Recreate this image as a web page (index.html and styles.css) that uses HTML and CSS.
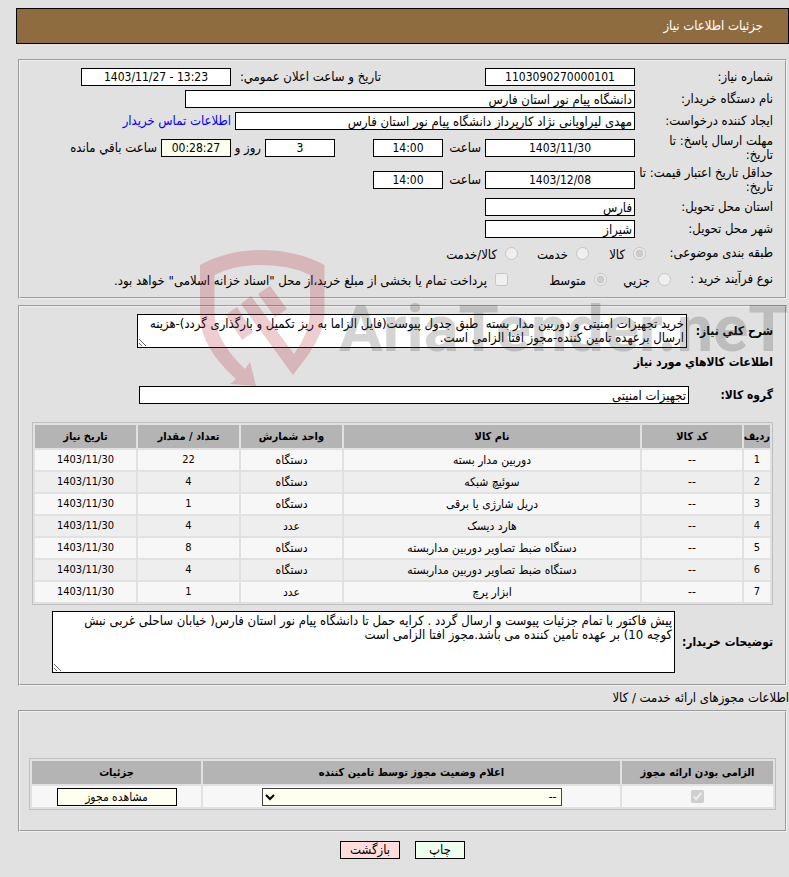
FILE: index.html
```
<!DOCTYPE html>
<html lang="fa" dir="rtl">
<head>
    <meta charset="UTF-8">
    <meta name="viewport" content="width=device-width, initial-scale=1.0">
    <title>جزئیات اطلاعات نیاز</title>
    <link rel="stylesheet" href="styles.css">
</head>
<body>
    <header class="page-title">جزئیات اطلاعات نیاز</header>

    <main>
        <fieldset class="panel panel-summary">
            <div class="row">
                <label class="caption" for="needNo">شماره نیاز:</label>
                <input class="field w-150 num" type="text" id="needNo" value="1103090270000101" readonly>
                <label class="announce" for="announceDate">تاریخ و ساعت اعلان عمومي:</label>
                <input class="field w-150 num" type="text" id="announceDate" value="1403/11/27 - 13:23" dir="ltr" readonly>
            </div>
            <div class="row">
                <label class="caption" for="buyer">نام دستگاه خریدار:</label>
                <input class="field w-450" type="text" id="buyer" value="دانشگاه پیام نور استان فارس" readonly>
            </div>
            <div class="row">
                <label class="caption" for="requester">ایجاد کننده درخواست:</label>
                <input class="field w-400" type="text" id="requester" value="مهدی لیراویانی نژاد کارپرداز دانشگاه پیام نور استان فارس" readonly>
                <a href="#contact" class="contact">اطلاعات تماس خریدار</a>
            </div>
            <div class="row row-tall">
                <label class="caption" for="replyDate">مهلت ارسال پاسخ: تا<br>تاریخ:</label>
                <input class="field w-150 num" type="text" id="replyDate" value="1403/11/30" readonly>
                <label class="hour" for="replyTime">ساعت</label>
                <input class="field w-70 num" type="text" id="replyTime" value="14:00" readonly>
                <input class="field w-70 num days" type="text" id="daysLeft" value="3" readonly>
                <label class="days-unit" for="daysLeft">روز و</label>
                <input class="field w-70 num timer" type="text" id="timeLeft" value="00:28:27" readonly>
                <label for="timeLeft">ساعت باقي مانده</label>
            </div>
            <div class="row row-tall">
                <label class="caption" for="priceDate">حداقل تاریخ اعتبار قیمت: تا<br>تاریخ:</label>
                <input class="field w-150 num" type="text" id="priceDate" value="1403/12/08" readonly>
                <label class="hour" for="priceTime">ساعت</label>
                <input class="field w-70 num" type="text" id="priceTime" value="14:00" readonly>
            </div>
            <div class="row">
                <label class="caption" for="province">استان محل تحویل:</label>
                <input class="field w-150" type="text" id="province" value="فارس" readonly>
            </div>
            <div class="row">
                <label class="caption" for="city">شهر محل تحویل:</label>
                <input class="field w-150" type="text" id="city" value="شیراز" readonly>
            </div>
            <div class="row row-options">
                <span class="caption caption-category">طبقه بندی موضوعی:</span>
                <label class="option opt-goods"><input type="radio" name="category" checked disabled><span>کالا</span></label>
                <label class="option opt-service"><input type="radio" name="category" disabled><span>خدمت</span></label>
                <label class="option"><input type="radio" name="category" disabled><span>کالا/خدمت</span></label>
            </div>
            <div class="row row-options">
                <span class="caption caption-process">نوع فرآیند خرید :</span>
                <label class="option opt-minor"><input type="radio" name="process" disabled><span>جزیي</span></label>
                <label class="option opt-medium"><input type="radio" name="process" checked disabled><span>متوسط</span></label>
                <label class="option"><input type="checkbox" disabled><span>پرداخت تمام یا بخشی از مبلغ خرید،از محل "اسناد خزانه اسلامی" خواهد بود.</span></label>
            </div>
        </fieldset>

        <fieldset class="panel panel-goods">
            <div class="row">
                <label class="strong caption-desc" for="needDesc">شرح کلي نیاز:</label>
                <textarea class="area area-desc" id="needDesc" readonly>خرید تجهیزات امنیتی و دوربین مدار بسته  طبق جدول پیوست(فایل الزاما به ریز تکمیل و بارگذاری گردد)-هزینه ارسال برعهده تامین کننده-مجوز افتا الزامی است.</textarea>
            </div>
            <h2 class="strong heading">اطلاعات کالاهاي مورد نیاز</h2>
            <div class="row">
                <label class="strong caption-group" for="goodsGroup">گروه کالا:</label>
                <input class="field w-550" type="text" id="goodsGroup" value="تجهیزات امنیتی" readonly>
            </div>

            <table class="grid goods">
                <colgroup>
                    <col class="c-index">
                    <col class="c-code">
                    <col>
                    <col class="c-unit">
                    <col class="c-unit">
                    <col class="c-unit">
                </colgroup>
                <thead>
                    <tr><th>ردیف</th><th>کد کالا</th><th>نام کالا</th><th>واحد شمارش</th><th>تعداد / مقدار</th><th>تاریخ نیاز</th></tr>
                </thead>
                <tbody>
                    <tr><td class="n">1</td><td>--</td><td>دوربین مدار بسته</td><td>دستگاه</td><td class="n">22</td><td class="n">1403/11/30</td></tr>
                    <tr><td class="n">2</td><td>--</td><td>سوئیچ شبکه</td><td>دستگاه</td><td class="n">4</td><td class="n">1403/11/30</td></tr>
                    <tr><td class="n">3</td><td>--</td><td>دریل شارژی یا برقی</td><td>دستگاه</td><td class="n">1</td><td class="n">1403/11/30</td></tr>
                    <tr><td class="n">4</td><td>--</td><td>هارد دیسک</td><td>عدد</td><td class="n">4</td><td class="n">1403/11/30</td></tr>
                    <tr><td class="n">5</td><td>--</td><td>دستگاه ضبط تصاویر دوربین مداربسته</td><td>دستگاه</td><td class="n">8</td><td class="n">1403/11/30</td></tr>
                    <tr><td class="n">6</td><td>--</td><td>دستگاه ضبط تصاویر دوربین مداربسته</td><td>دستگاه</td><td class="n">4</td><td class="n">1403/11/30</td></tr>
                    <tr><td class="n">7</td><td>--</td><td>ابزار پرچ</td><td>عدد</td><td class="n">1</td><td class="n">1403/11/30</td></tr>
                </tbody>
            </table>

            <div class="row">
                <label class="strong caption-notes" for="buyerNotes">توضیحات خریدار:</label>
                <textarea class="area area-notes" id="buyerNotes" readonly>پیش فاکتور با تمام جزئیات پیوست و ارسال گردد . کرایه حمل تا دانشگاه پیام نور استان فارس( خیابان ساحلی غربی نبش کوچه 10) بر عهده تامین کننده می باشد.مجوز افتا الزامی است</textarea>
            </div>
        </fieldset>

        <p class="permits-title">اطلاعات مجوزهای ارائه خدمت / کالا</p>

        <fieldset class="panel panel-permits">
            <table class="grid permits">
                <colgroup>
                    <col class="c-required">
                    <col>
                    <col class="c-details">
                </colgroup>
                <thead>
                    <tr><th>الزامی بودن ارائه مجوز</th><th>اعلام وضعیت مجوز توسط تامین کننده</th><th>جزئیات</th></tr>
                </thead>
                <tbody>
                    <tr>
                        <td><input type="checkbox" aria-label="الزامی بودن ارائه مجوز" checked disabled></td>
                        <td>
                            <select class="status" aria-label="اعلام وضعیت مجوز">
                                <option>--</option>
                            </select>
                        </td>
                        <td><button type="button" class="btn btn-view">مشاهده مجوز</button></td>
                    </tr>
                </tbody>
            </table>
        </fieldset>
    </main>

    <footer class="actions">
        <button type="button" class="btn btn-print">چاپ</button>
        <button type="button" class="btn btn-back">بازگشت</button>
    </footer>

    <div class="watermark" dir="ltr" aria-hidden="true">
        <svg class="shield" viewBox="200 250 125 137" width="125" height="137">
            <!-- shield outline with the arrow on the left and the tick on the right -->
            <path d="M200 265Q228 250 262 250Q296 250 324.500 265V314C324 335 308 356 293 375L241 304L251 296L294 354Q309 334 310 314V275Q290 265 262 265Q234 265 214.500 275V314Q216 342 245 369L250 362L256 386L230 384L236 379Q201 348 200 316Z"/>
            <path d="M270 286L287 309L275 317L258 294Z"/>
            <path d="M237 307L253 332L242 340L226 315Z"/>
        </svg>
        <span class="brand">AriaTender.neT</span>
    </div>
</body>
</html>
```
FILE: styles.css
```
* {
    box-sizing: border-box;
}

body {
    position: relative;
    margin: 0;
    padding: 8px 0 0 16px;
    min-height: 100vh;
    background: #e1e1e1;
    color: #000;
    font-family: Tahoma, "DejaVu Sans Condensed", "DejaVu Sans", sans-serif;
    font-size: 13px;
    line-height: 14px;
    overflow-x: hidden;
}

input,
textarea,
select,
button {
    margin: 0;
    font: inherit;
    color: inherit;
}

.page-title {
    display: flex;
    align-items: center;
    height: 36px;
    padding: 0 25px;
    border: 1px solid #000;
    background: #8f6c40;
    color: #fff;
}

main {
    padding: 0 2px;
}

.panel {
    min-width: 0;
    margin: 0;
    border: 2px groove #f0f0f0;
}

.panel-summary {
    margin-top: 15px;
    padding: 5px 12px;
}

.panel-goods {
    margin-top: 6px;
    padding: 7px 12px 11px;
}

.panel-permits {
    padding: 46px 9px 20px;
}

/* form rows */
.row {
    display: flex;
    align-items: center;
    gap: 4px;
    min-height: 22px;
    white-space: nowrap;
}

.row-tall {
    min-height: 32px;
}

.row-options {
    min-height: 26px;
}

.caption {
    width: 134px;
    flex: none;
}

.caption-category { width: 123px; }
.caption-process { width: 98px; }

.strong {
    flex: none;
    font-size: 12px;
    font-weight: bold;
}

.caption-desc { width: 82px; }
.caption-group { width: 80px; }
.caption-notes { width: 94px; }

.heading {
    margin: 7px 0 15px;
}

.field {
    height: 18px;
    padding: 0 2px;
    border: 1px solid #000;
    background: #fff;
}

.num {
    font-size: 12px;
    text-align: center;
}

.w-70 { width: 70px; }
.w-150 { width: 150px; }
.w-400 { width: 400px; }
.w-450 { width: 450px; }
.w-550 { width: 550px; }

.announce {
    width: 146px;
    margin-right: 100px;
}

.hour {
    width: 34px;
}

.days {
    margin-right: 34px;
}

.days-unit {
    width: 26px;
}

.timer {
    background: #fffff0;
}

.contact {
    color: #0000ff;
    text-decoration: none;
}

.option {
    display: flex;
    align-items: center;
    gap: 8px;
}

.option span {
    padding-top: 4px;
}

.option input {
    width: 13px;
    height: 13px;
}

.opt-goods { width: 53px; }
.opt-service { width: 67px; }
.opt-minor { width: 60px; }
.opt-medium { width: 95px; }

.area {
    padding: 2px;
    border: 1px solid #000;
    background: #fff;
    overflow: hidden;
    resize: both;
}

.area-desc {
    width: 550px;
    height: 34px;
}

.area-notes {
    width: 623px;
    height: 62px;
    padding-left: 20px;
}

/* data grids */
.grid {
    width: 100%;
    border: 1px solid #bfbfbf;
    border-collapse: separate;
    border-spacing: 2px;
    table-layout: fixed;
    font-size: 12px;
    text-align: center;
}

.grid th {
    height: 23px;
    padding: 0;
    background: #b4b4b4;
    font-size: 11px;
}

.grid td {
    height: 20px;
    padding: 0;
    background: #f7f7f7;
}

.grid tbody tr:nth-child(even) td {
    background: #eee;
}

.grid .n {
    font-size: 11px;
}

.goods {
    margin: 16px 0 6px;
}

.c-index { width: 26px; }
.c-code { width: 100px; }
.c-unit { width: 101px; }
.c-required { width: 151px; }
.c-details { width: 169px; }

.permits td {
    height: 21px;
    vertical-align: middle;
}

.permits input,
.permits select,
.permits button {
    display: block;
    margin: 0 auto;
}

.permits-title {
    margin: 0 -2px;
    line-height: 24px;
}

.status {
    width: 300px;
    height: 18px;
    padding: 0;
    border: 1px solid #444;
    background: #fffff0;
}

.btn {
    height: 18px;
    padding: 0;
    border: 1px solid #000;
}

.btn-view {
    width: 120px;
    background: #fffff0;
}

.btn-print {
    width: 50px;
    background: #efe;
}

.btn-back {
    width: 60px;
    background: #fdd;
}

.actions {
    display: flex;
    justify-content: center;
    gap: 15px;
    padding: 9px 0;
}

/* watermark */
.watermark {
    position: absolute;
    top: 250px;
    left: 200px;
    right: 0;
    display: flex;
    overflow: hidden;
    opacity: 0.22;
    pointer-events: none;
}

.shield {
    flex: none;
    fill: #b02030;
}

.brand {
    margin-left: 14px;
    color: #404040;
    font: bold 65px/158px Roboto, sans-serif;
    white-space: nowrap;
}
```
